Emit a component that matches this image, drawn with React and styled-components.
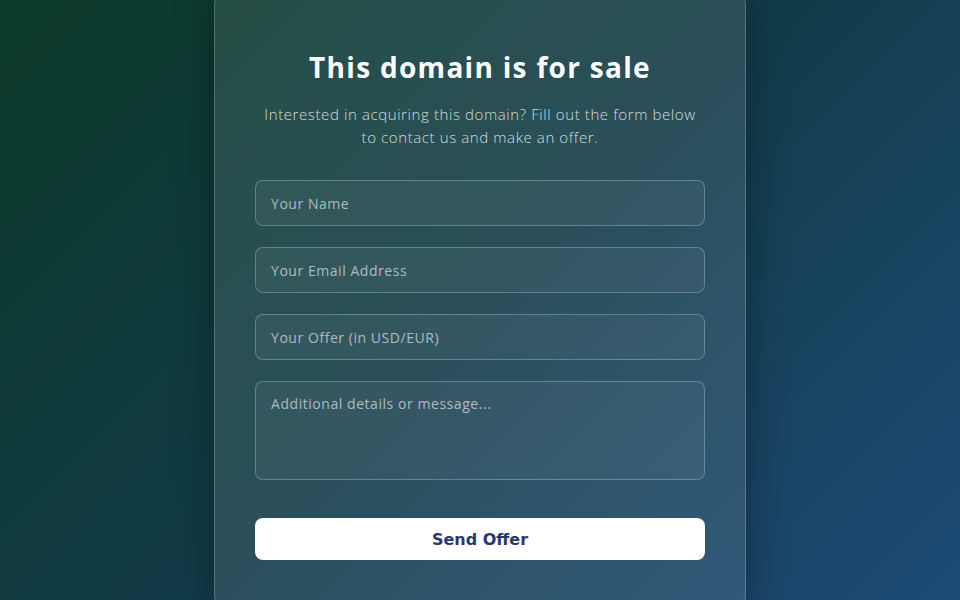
import React from "react";
import styled, { createGlobalStyle } from "styled-components";

const Global = createGlobalStyle`
  html, body { margin: 0; padding: 0; }
  body {
    font-family: "Open Sans", "Noto Sans", sans-serif;
    background: linear-gradient(135deg, #0c3a29 0%, #123b48 50%, #1e4b78 100%);
    min-height: 100vh;
  }
  * { box-sizing: border-box; }
`;

const Page = styled.div`
  height: 100vh;
  display: flex;
  align-items: center;
  justify-content: center;
  overflow: hidden;
`;

const Card = styled.div`
  flex: none;
  width: 532px;
  padding: 57px 40px 50px;
  background: rgba(255, 255, 255, 0.1);
  border: 1px solid rgba(255, 255, 255, 0.2);
  border-radius: 16px;
  box-shadow: 0 8px 40px rgba(0, 0, 0, 0.35);
  display: flex;
  flex-direction: column;
`;

const Title = styled.h1`
  margin: 0 0 16px;
  font-size: 28px;
  line-height: 40px;
  font-weight: 700;
  color: #ffffff;
  text-align: center;
  letter-spacing: 1.3px;
`;

const Subtitle = styled.p`
  margin: 0 0 31px;
  font-size: 15px;
  line-height: 23px;
  font-weight: 300;
  color: rgba(255, 255, 255, 0.8);
  text-align: center;
  letter-spacing: 0.6px;
`;

const Form = styled.form`
  display: flex;
  flex-direction: column;
  gap: 21px;
`;

const fieldStyles = `
  width: 100%;
  background: rgba(255, 255, 255, 0.05);
  border: 1px solid rgba(255, 255, 255, 0.25);
  border-radius: 8px;
  padding: 0 15px;
  font-family: "Open Sans", "Noto Sans", sans-serif;
  font-size: 14px;
  font-weight: 500;
  letter-spacing: 0.55px;
  color: #fff;
  outline: none;
  &::placeholder { color: rgba(255, 255, 255, 0.6); }
`;

const Input = styled.input`
  ${fieldStyles}
  height: 46px;
`;

const TextArea = styled.textarea`
  ${fieldStyles}
  height: 99px;
  padding-top: 12px;
  resize: none;
  line-height: 20px;
`;

const Button = styled.button`
  margin-top: 17px;
  height: 42px;
  width: 100%;
  border: none;
  border-radius: 8px;
  background: #ffffff;
  color: #28386c;
  font-family: "DejaVu Sans", sans-serif;
  font-weight: 700;
  font-size: 16px;
  cursor: pointer;
`;

export default function App() {
  return (
    <>
      <Global />
      <Page>
        <Card>
          <Title>This domain is for sale</Title>
          <Subtitle>
            Interested in acquiring this domain? Fill out the form below
            <br />
            to contact us and make an offer.
          </Subtitle>
          <Form onSubmit={(e) => e.preventDefault()}>
            <Input placeholder="Your Name" />
            <Input placeholder="Your Email Address" />
            <Input placeholder="Your Offer (in USD/EUR)" />
            <TextArea placeholder="Additional details or message..." />
            <Button type="submit">Send Offer</Button>
          </Form>
        </Card>
      </Page>
    </>
  );
}
